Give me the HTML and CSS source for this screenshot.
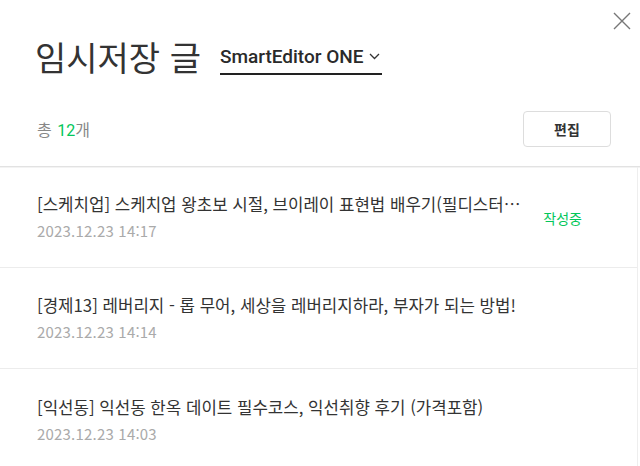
FILE: index.html
```html
<!DOCTYPE html>
<html lang="ko">
<head>
    <meta charset="UTF-8">
    <meta name="viewport" content="width=device-width, initial-scale=1.0">
    <title>임시저장 글</title>
    <link rel="stylesheet" href="styles.css">
</head>
<body>
    <div class="panel">
        <button class="close-btn" type="button" aria-label="닫기">
            <svg width="18" height="18" viewBox="0 0 18 18">
                <path d="M1 1 L17 17 M17 1 L1 17" stroke="#777" stroke-width="1.4" fill="none"/>
            </svg>
        </button>

        <header class="panel-header">
            <h1 class="panel-title">임시저장 글</h1>
            <div class="editor-select">
                <span>SmartEditor ONE</span>
                <svg width="11" height="7" viewBox="0 0 11 7">
                    <polyline points="1,1 5.5,5.5 10,1" stroke="#333" stroke-width="1.3" fill="none"/>
                </svg>
            </div>
        </header>

        <div class="toolbar">
            <p class="count">총 <em>12</em>개</p>
            <button class="edit-btn" type="button">편집</button>
        </div>

        <ul class="post-list">
            <li class="post-item">
                <div class="post-body">
                    <p class="post-title">[스케치업] 스케치업 왕초보 시절, 브이레이 표현법 배우기(필디스터디 후기)</p>
                    <p class="post-date">2023.12.23 14:17</p>
                </div>
                <span class="post-status">작성중</span>
            </li>
            <li class="post-item">
                <div class="post-body">
                    <p class="post-title">[경제13] 레버리지 - 롭 무어, 세상을 레버리지하라, 부자가 되는 방법!</p>
                    <p class="post-date">2023.12.23 14:14</p>
                </div>
            </li>
            <li class="post-item">
                <div class="post-body">
                    <p class="post-title">[익선동] 익선동 한옥 데이트 필수코스, 익선취향 후기 (가격포함)</p>
                    <p class="post-date">2023.12.23 14:03</p>
                </div>
            </li>
        </ul>
    </div>
</body>
</html>
```

FILE: styles.css
```css
body {
    margin: 0;
    padding: 0;
    background: #fff;
    font-family: "Noto Sans CJK KR", "Noto Sans", sans-serif;
    color: #333;
}

p, h1, ul {
    margin: 0;
    padding: 0;
}

.panel {
    position: relative;
    width: 640px;
    height: 466px;
    overflow: hidden;
    background: #fff;
}

.close-btn {
    position: absolute;
    top: 12px;
    right: 9px;
    width: 18px;
    height: 18px;
    padding: 0;
    border: none;
    background: none;
    cursor: pointer;
}

.close-btn svg {
    display: block;
}

.panel-header {
    display: flex;
    align-items: center;
    padding: 34px 0 0 35px;
    height: 46px;
}

.panel-title {
    font-size: 34px;
    font-weight: 400;
    line-height: 46px;
    color: #333;
}

.editor-select {
    display: flex;
    align-items: center;
    gap: 6px;
    margin-left: 19px;
    margin-top: 4px;
    padding: 0 2px 3px 0;
    border-bottom: 2px solid #222;
    font-family: Roboto, "Noto Sans CJK KR", sans-serif;
    font-size: 19px;
    font-weight: 500;
    line-height: 26px;
    color: #2a2a2a;
    cursor: pointer;
}

.editor-select svg {
    display: block;
}

.toolbar {
    display: flex;
    justify-content: space-between;
    align-items: center;
    margin-top: 31px;
    padding: 0 29px 19px 37px;
    border-bottom: 1px solid #e2e2e2;
    box-shadow: 0 1px 0 #f3f3f3;
}

.count {
    font-size: 16px;
    color: #888;
}

.count em {
    font-style: normal;
    font-family: Roboto, sans-serif;
    color: #03c75a;
    margin-left: 1px;
}

.edit-btn {
    width: 88px;
    height: 36px;
    border: 1px solid #ddd;
    border-radius: 4px;
    background: #fff;
    font-family: inherit;
    font-size: 14px;
    font-weight: 700;
    color: #333;
    cursor: pointer;
}

.post-list {
    list-style: none;
    margin-right: 2px;
    border-right: 1px solid #eee;
}

.post-item {
    display: flex;
    align-items: center;
    gap: 21px;
    height: 101px;
    padding: 0 55px 0 37px;
    border-bottom: 1px solid #ececec;
    box-sizing: border-box;
}

.post-item:last-child {
    border-bottom: none;
}

.post-body {
    flex: 1;
    min-width: 0;
}

.post-title {
    font-size: 16.8px;
    line-height: 23px;
    color: #333;
    white-space: nowrap;
    overflow: hidden;
    text-overflow: ellipsis;
}

.post-date {
    margin-top: 5px;
    font-size: 15px;
    line-height: 20px;
    color: #aaa;
    letter-spacing: 0.2px;
}

.post-status {
    flex: none;
    font-size: 14px;
    color: #03c75a;
    margin-top: 2px;
}
```
